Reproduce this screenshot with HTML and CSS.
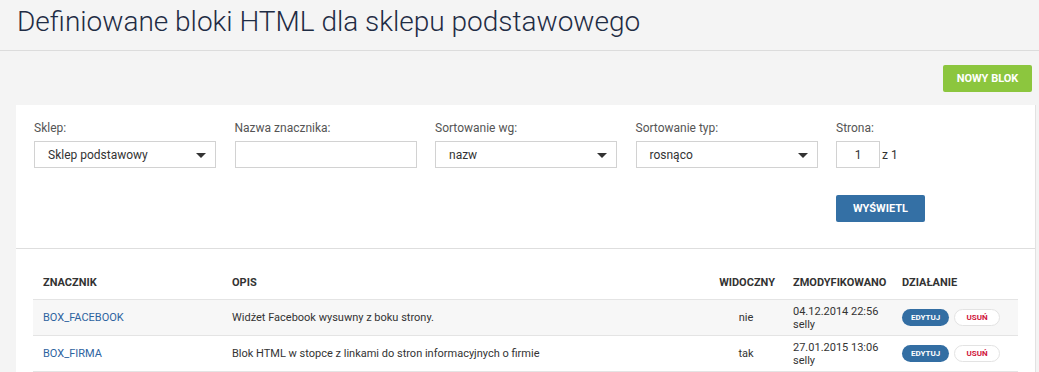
FILE: index.html
```html
<!DOCTYPE html>
<html lang="pl">
<head>
    <meta charset="UTF-8">
    <title>Definiowane bloki HTML</title>
    <link rel="stylesheet" href="styles.css">
</head>
<body>
    <header class="page-header">
        <h1>Definiowane bloki HTML dla sklepu podstawowego</h1>
    </header>

    <div class="toolbar">
        <button class="btn-new">NOWY BLOK</button>
    </div>

    <div class="panel">
        <form class="filters">
            <div class="field">
                <label>Sklep:</label>
                <div class="select"><span>Sklep podstawowy</span></div>
            </div>
            <div class="field">
                <label>Nazwa znacznika:</label>
                <input type="text" class="text-input">
            </div>
            <div class="field">
                <label>Sortowanie wg:</label>
                <div class="select"><span>nazw</span></div>
            </div>
            <div class="field">
                <label>Sortowanie typ:</label>
                <div class="select"><span>rosnąco</span></div>
            </div>
            <div class="field">
                <label>Strona:</label>
                <div class="page-box">
                    <input type="text" class="page-input" value="1">
                    <span>z 1</span>
                </div>
            </div>
            <div class="field submit-cell">
                <button type="button" class="btn-show">WYŚWIETL</button>
            </div>
        </form>

        <div class="list">
            <table>
                <colgroup>
                    <col class="c-tag">
                    <col>
                    <col class="c-vis">
                    <col class="c-mod">
                    <col class="c-act">
                </colgroup>
                <thead>
                    <tr>
                        <th>ZNACZNIK</th>
                        <th>OPIS</th>
                        <th class="vis">WIDOCZNY</th>
                        <th>ZMODYFIKOWANO</th>
                        <th>DZIAŁANIE</th>
                    </tr>
                </thead>
                <tbody>
                    <tr class="odd">
                        <td><a href="#">BOX_FACEBOOK</a></td>
                        <td>Widżet Facebook wysuwny z boku strony.</td>
                        <td class="vis">nie</td>
                        <td>04.12.2014 22:56<br>selly</td>
                        <td><a href="#" class="pill edit">EDYTUJ</a><a href="#" class="pill del">USUŃ</a></td>
                    </tr>
                    <tr>
                        <td><a href="#">BOX_FIRMA</a></td>
                        <td>Blok HTML w stopce z linkami do stron informacyjnych o firmie</td>
                        <td class="vis">tak</td>
                        <td>27.01.2015 13:06<br>selly</td>
                        <td><a href="#" class="pill edit">EDYTUJ</a><a href="#" class="pill del">USUŃ</a></td>
                    </tr>
                </tbody>
            </table>
        </div>
    </div>
</body>
</html>
```

FILE: styles.css
```css
body {
    margin: 0;
    background-color: #f4f4f4;
    font-family: Roboto, "Liberation Sans", sans-serif;
    color: #333;
}

.page-header {
    height: 51px;
    border-bottom: 1px solid #dcdcdc;
    padding: 0 17px;
    box-sizing: border-box;
}

.page-header h1 {
    margin: 0;
    padding-top: 5px;
    font-size: 28px;
    font-weight: 300;
    color: #1f2c44;
    line-height: 34px;
}

.toolbar {
    display: flex;
    justify-content: flex-end;
    padding: 14px 7px 13px;
}

.btn-new {
    width: 89px;
    height: 27px;
    border: none;
    border-radius: 2px;
    background-color: #8cc63e;
    color: #fff;
    font-family: Roboto, sans-serif;
    font-size: 11px;
    font-weight: bold;
    cursor: pointer;
}

.panel {
    margin: 0 3px 0 16px;
    background: #fff;
    border-right: 1px solid #e2e2e2;
}

.filters {
    display: grid;
    grid-template-columns: repeat(5, 182px);
    column-gap: 18.5px;
    row-gap: 27px;
    padding: 16px 18px 26px;
    border-bottom: 1px solid #dedede;
}

.field label {
    display: block;
    font-size: 12px;
    color: #555;
    height: 14px;
    line-height: 14px;
    margin-bottom: 6px;
}

.select,
.text-input,
.page-input {
    height: 27px;
    box-sizing: border-box;
    border: 1px solid #d2d2d2;
    background: #fff;
    font-family: Roboto, sans-serif;
    font-size: 12px;
    color: #333;
}

.select {
    position: relative;
    display: flex;
    align-items: center;
    padding-left: 13px;
}

.select::after {
    content: "";
    position: absolute;
    right: 9px;
    top: 11px;
    border-left: 5px solid transparent;
    border-right: 5px solid transparent;
    border-top: 5px solid #333;
}

.text-input {
    width: 100%;
    margin: 0;
}

.page-box {
    display: flex;
    align-items: center;
    gap: 2px;
    font-size: 12px;
}

.page-input {
    width: 44px;
    margin: 0;
    text-align: center;
}

.submit-cell {
    grid-column: 5;
}

.btn-show {
    width: 89px;
    height: 27px;
    border: none;
    border-radius: 2px;
    background-color: #3470a5;
    color: #fff;
    font-family: Roboto, sans-serif;
    font-size: 11px;
    font-weight: bold;
}

.list {
    padding: 16px 17px 0;
}

table {
    width: 100%;
    table-layout: fixed;
    border-collapse: collapse;
    font-size: 11px;
}

.c-tag { width: 189px; }
.c-vis { width: 82px; }
.c-mod { width: 109px; }
.c-act { width: 126px; }

th {
    height: 34px;
    text-align: left;
    font-weight: bold;
    color: #333;
    padding: 0 8px 0 10px;
    border-bottom: 1px solid #e4e4e4;
}

td {
    height: 35px;
    padding: 0 8px 0 10px;
    border-bottom: 1px solid #e4e4e4;
    line-height: 13px;
    color: #333;
}

th.vis {
    text-align: right;
}

td.vis {
    text-align: center;
    padding-left: 16px;
}

tr.odd td {
    background: #f7f7f7;
}

td a {
    color: #2d63a0;
    text-decoration: none;
}

.pill {
    display: inline-block;
    height: 17px;
    line-height: 17px;
    border-radius: 9px;
    font-size: 8px;
    font-weight: bold;
    text-align: center;
    vertical-align: middle;
}

td a.edit {
    width: 47px;
    background: #336ea3;
    color: #fff;
}

td a.del {
    width: 44px;
    margin-left: 5px;
    height: 15px;
    line-height: 15px;
    border: 1px solid #e3e3e3;
    background: #fff;
    color: #d0163b;
}
```
